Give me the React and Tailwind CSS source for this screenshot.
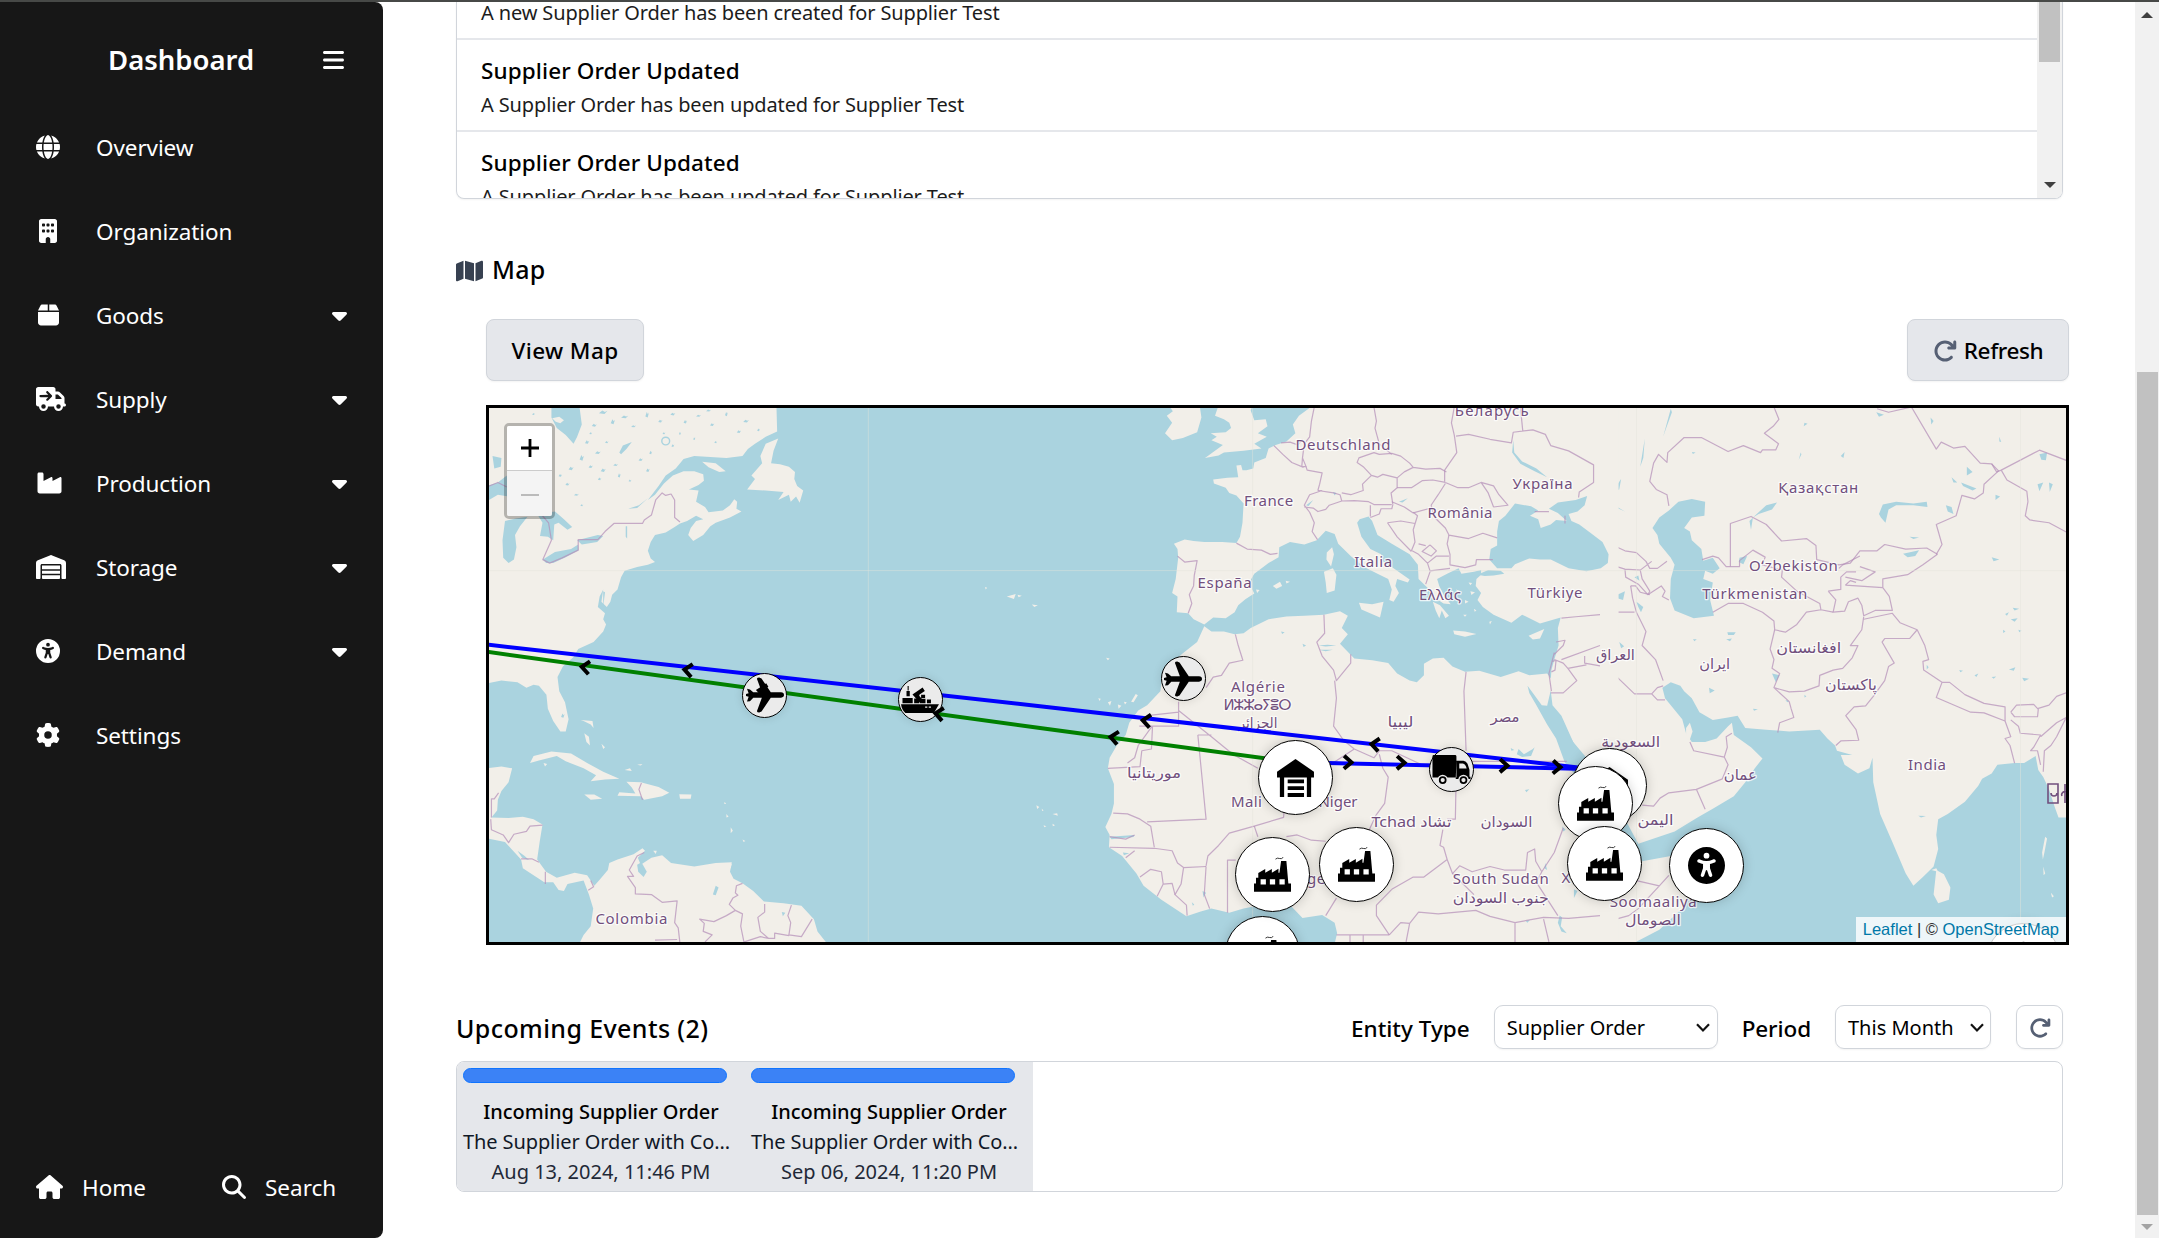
import React from "react";
import {
  FaGlobe, FaBuilding, FaBox, FaTruckArrowRight, FaIndustry, FaWarehouse, FaUniversalAccess, FaGear,
  FaHouse, FaMagnifyingGlass, FaBars, FaCaretDown, FaMap, FaArrowRotateRight,
} from "react-icons/fa6";

const NAV = [
  ["Overview", FaGlobe, "w-6", false],
  ["Organization", FaBuilding, "w-[18px]", false],
  ["Goods", FaBox, "w-[21px]", true],
  ["Supply", FaTruckArrowRight, "w-[30px]", true],
  ["Production", FaIndustry, "w-[27px]", true],
  ["Storage", FaWarehouse, "w-[30px]", true],
  ["Demand", FaUniversalAccess, "w-6", true],
  ["Settings", FaGear, "w-6", false],
];

function Sidebar() {
  return (
    <aside className="flex w-[383px] shrink-0 flex-col rounded-r-lg bg-[#171717] text-[22.5px] text-white">
      <div className="flex h-[103px] items-center justify-between pr-[39px] pl-[108px] pt-[12px]">
        <h1 className="text-[27.5px] leading-none font-semibold">Dashboard</h1>
        <FaBars className="h-6 w-[21px]" />
      </div>
      <nav className="flex flex-col">
        {NAV.map(([label, Icon, width, caret]) => (
          <div key={label} className="flex h-[84px] items-center pr-[36px] pl-[36px]">
            <span className="flex w-[60px] items-center">
              <span className="flex min-w-6 justify-center">
                <Icon className={`h-6 ${width}`} />
              </span>
            </span>
            <span className="flex-1 pt-[2px] tracking-[-0.1px]">{label}</span>
            {caret && <FaCaretDown className="h-6 w-[15px]" />}
          </div>
        ))}
      </nav>
      <div className="mt-auto flex h-[102px] items-center pl-[36px]">
        <FaHouse className="h-6 w-[27px]" />
        <span className="ml-[19px] w-[140px] pt-[1px]">Home</span>
        <FaMagnifyingGlass className="size-6" />
        <span className="ml-[19px] pt-[1px]">Search</span>
      </div>
    </aside>
  );
}

const NOTES = [
  ["", "A new Supplier Order has been created for Supplier Test"],
  ["Supplier Order Updated", "A Supplier Order has been updated for Supplier Test"],
  ["Supplier Order Updated", "A Supplier Order has been updated for Supplier Test"],
];

function Notifications() {
  return (
    <section className="flex h-[197px] overflow-hidden rounded-b-lg border border-t-0 border-[#d1d5db] shadow-xs">
      <div className="flex min-w-0 flex-1 flex-col justify-start">
        <div className="-mt-[54px] flex flex-col">
          {NOTES.map(([title, text], i) => (
            <div key={i} className="flex h-[92px] shrink-0 flex-col border-b-2 border-[#e5e7eb] px-[24px] pt-[15px]">
              <span className="h-[33px] text-[22.5px] leading-[32px] font-medium tracking-[0.1px]">{title}</span>
              <span className="h-[33px] text-[20px] leading-[33px] tracking-[-0.13px] text-[#1c1c1c]">{text}</span>
            </div>
          ))}
        </div>
      </div>
      <div className="flex w-[25px] flex-col items-center justify-between bg-[#f1f1f1] pb-[10px]">
        <div className="h-[60px] w-[21px] bg-[#c1c1c1]" />
        <div className="h-0 w-0 border-x-[6px] border-t-[6px] border-x-transparent border-t-[#404040]" />
      </div>
    </section>
  );
}

/* Land, water and border outlines are kept in three sheets (west, middle, east),
   each with its own offset and scale into page pixels. */
const SHEET_WEST = "translate(480 400) scale(0.357143 0.350765)";
const SHEET_MIDDLE = "translate(1040 400) scale(0.357143 0.350765)";
const SHEET_EAST = "translate(1560 400) scale(0.382015 0.350765)";

const WEST_LAND = [
  "M20 15L830 15 832 90 800 105 770 125 750 140 735 160 690 165 600 160 570 168 548 195 520 215 500 245 470 285 490 270 515 238 540 215 570 203 600 203 625 212 627 230 612 242 585 255 612 258 605 290 630 305 640 320 680 315 700 300 712 283 720 290 718 310 732 318 700 335 660 350 645 360 625 385 597 402 583 385 590 365 605 345 625 340 605 330 580 345 560 352 545 362 520 378 490 385 478 405 470 430 478 452 490 462 470 470 440 476 405 487 395 505 385 540 370 555 365 575 355 590 340 575 345 540 335 560 330 590 350 608 345 625 353 640 345 660 318 690 275 710 262 733 232 760 217 790 222 830 238 862 248 910 240 945 225 945 205 915 190 880 186 840 165 815 150 812 130 820 105 805 60 800 20 808Z",
  "M835 110L822 145 815 180 840 183 865 190 882 205 880 225 888 245 905 258 895 293 885 275 870 290 865 270 835 285 850 262 800 258 748 255 770 225 760 215 790 180 785 160 800 125Z",
  "M622 176L660 180 688 203 670 205 640 192Z",
  "M140 1035L150 1015 200 1002 255 1008 300 1035 345 1060 390 1080 350 1082 310 1087 325 1070 290 1050 240 1030 215 1015 165 1028Z",
  "M410 1088L450 1090 500 1103 530 1120 510 1130 460 1140 450 1130 385 1128 390 1118 435 1122 425 1105Z",
  "M292 1125L320 1125 342 1137 310 1140Z",
  "M558 1124L592 1125 590 1137 560 1137Z",
  "M20 1050L60 1045 90 1050 80 1090 60 1115 50 1140 48 1170 32 1190 80 1192 120 1188 150 1195 175 1210 167 1260 160 1310 185 1345 215 1362 265 1348 300 1355 320 1385 335 1368 358 1340 362 1320 385 1310 430 1295 455 1278 462 1285 442 1305 450 1325 480 1305 510 1298 535 1320 600 1330 660 1320 705 1318 700 1345 710 1365 735 1378 765 1400 795 1430 850 1435 900 1442 935 1480 945 1515 972 1550 278 1550 290 1525 310 1500 317 1450 305 1410 290 1370 245 1380 235 1400 220 1397 205 1375 180 1375 120 1335 115 1310 70 1260 20 1250Z",
  "M282 912L315 915 318 935 310 925 290 915ZM292 950L305 960 308 985 298 975ZM340 980L350 990 345 995ZM405 1055L420 1050 425 1058ZM440 1040L455 1038 450 1042ZM678 1325L705 1322 702 1335 685 1332ZM178 1035L188 1038 182 1045ZM485 1285L495 1285 492 1294ZM702 1218L708 1228 702 1235ZM690 1180L696 1188 690 1190ZM735 1253L743 1257 738 1260ZM685 1145L689 1152 684 1152ZM1475 560L1500 553 1495 567ZM1505 555L1517 558 1508 562ZM1545 583L1562 585 1552 590ZM1414 533L1420 535 1416 540ZM1558 1155L1566 1160 1560 1166Z",
];
const WEST_WATER = [
  "M200 15L278 15 285 70 272 105 262 125 240 100 215 80 200 50Z",
  "M20 245L50 235 75 215 80 275 50 270 20 288Z",
  "M70 345L100 338 133 333 112 360 98 385 102 420 95 455 80 465 65 450 63 400Z",
  "M160 325L210 318 235 340 258 362 245 370 220 350 208 355 205 400 190 390 168 388 175 350Z",
  "M176 455L210 433 255 425 275 412 276 428 240 448 205 465 185 465Z",
  "M272 400L330 385 345 388 328 405 285 412Z",
  "M440 1325L452 1318 467 1345 458 1360 443 1345Z",
  "M105 1285L125 1300 138 1312 118 1305ZM652 1410L660 1385 668 1390 660 1412ZM845 1460L855 1462 848 1472Z",
  "M390 150L400 130 425 120 410 140 395 155ZM408 360L412 360 412 395 408 390ZM415 310L445 300 470 280 440 308ZM35 160L60 165 58 190 40 195ZM345 545L350 548 345 590Z",
];
const WEST_SPECKS = [
  [320, 72, 7, 4], [345, 35, 12, 5], [372, 62, 6, 7], [405, 48, 10, 4], [430, 75, 7, 3], [468, 42, 5, 8], [505, 60, 6, 4], [540, 40, 7, 4],
  [575, 62, 5, 5], [612, 45, 7, 3], [650, 70, 6, 4], [690, 40, 4, 6], [745, 60, 8, 4], [725, 90, 6, 4], [780, 85, 4, 4], [300, 120, 6, 5], [330, 150, 8, 4],
  [285, 165, 6, 8], [310, 190, 6, 4], [345, 200, 7, 5], [450, 170, 6, 4], [478, 150, 4, 5], [515, 95, 4, 3], [540, 130, 4, 4], [470, 200, 5, 5], [380, 185, 7, 3],
  [335, 225, 5, 4], [255, 195, 7, 5], [245, 240, 6, 4], [270, 270, 7, 3], [225, 215, 5, 4], [285, 300, 4, 3], [165, 210, 4, 4], [150, 40, 4, 3], [600, 110, 3, 4], [660, 120, 4, 3],
  [420, 230, 4, 3], [310, 95, 4, 3], [355, 120, 5, 3], [232, 900, 5, 6], [390, 215, 4, 6], [560, 95, 3, 4], [640, 30, 7, 3],
];
const WEST_BORDERS = [
  "M22 247L50 235 75 248M175 330L192 350 200 400 176 455 195 465 230 450 275 428 275 398 330 398 350 375 375 352 455 352 460 342 480 328 492 285 510 265 520 272 535 268 545 285 545 335 560 348",
  "M460 1290L440 1300 418 1340 430 1358 413 1358 435 1390 435 1408 480 1410 510 1432 552 1428 545 1490 555 1505 560 1550M490 1540L552 1538",
  "M735 1378L718 1385 715 1405 722 1412 708 1420 698 1438 715 1455 690 1470 655 1487 615 1480 628 1492 625 1515 650 1525 630 1545M715 1455L735 1465 730 1500 740 1550",
  "M797 1437L797 1460 778 1475 785 1515 808 1535 825 1535 825 1520 865 1527M872 1440L862 1470 870 1490 865 1525 900 1530 930 1480M740 1545L785 1530 808 1535",
  "M32 1190L32 1137 40 1137 52 1120M30 1195L32 1225 65 1240 80 1262 95 1238 130 1230 140 1215 175 1212M115 1308L145 1308 165 1318M183 1345V1380M310 1370L318 1388 303 1398M452 1092L445 1110 455 1140",
];
const LAKE_RING = [520, 117, 11];

const MIDDLE_LAND = [
  "M765 15L725 45 708 70 715 95 690 118 660 128 640 138 632 165 600 178 597 195 578 200 567 200 563 185 550 187 555 220 525 222 485 227 487 238 520 250 530 265 550 272 570 295 567 350 560 390 550 408 510 405 460 405 430 402 405 398 375 410 385 425 387 450 380 510 370 550 385 560 383 605 415 608 430 625 460 640 485 620 520 622 545 605 555 585 575 568 600 552 585 522 600 495 640 465 668 448 670 420 700 405 740 412 775 400 800 373 825 382 835 410 870 445 905 475 945 495 975 510 985 540 978 570 990 575 1005 550 995 530 1000 510 1030 520 1035 512 990 480 960 460 955 440 925 425 900 390 888 350 895 340 920 332 930 345 945 385 985 410 1035 440 1058 470 1060 510 1085 535 1100 560 1130 580 1150 582 1130 555 1118 530 1112 510 1140 495 1172 480 1180 495 1215 490 1235 485 1235 498 1222 510 1220 530 1235 550 1225 570 1240 590 1270 612 1320 635 1350 612 1400 637 1458 620 1450 650 1452 700 1440 740 1432 770 1425 870 1450 900 1570 1110 1620 1110 1620 15Z",
  "M1100 575L1120 585 1145 615 1135 622 1125 600 1118 622 1108 600Z",
  "M460 645L440 690 400 722 345 770 337 830 300 870 275 885 250 920 240 955 215 985 195 1020 190 1050 207 1095 207 1150 200 1180 183 1217 195 1240 193 1275 230 1300 270 1350 290 1385 340 1425 410 1472 450 1458 480 1450 530 1462 570 1450 620 1440 650 1430 700 1440 735 1477 790 1468 825 1490 832 1520 825 1550 1620 1550 1620 1060 1500 1010 1435 800 1420 780 1370 785 1340 773 1290 790 1230 772 1190 775 1155 760 1130 735 1100 737 1075 752 1075 785 1055 805 1035 800 1000 780 975 750 930 742 880 737 840 695 862 668 845 650 862 615 840 602 795 612 740 615 690 617 640 625 590 650 570 665 545 668 515 660 480 660Z",
  "M500 15L490 45 515 55 530 65 535 80 520 92 478 95 495 105 480 115 512 128 490 145 462 165 500 158 515 150 570 145 620 138 600 125 635 105 610 95 637 75 632 55 600 58 590 30 595 15Z",
  "M360 15L372 32 355 45 370 65 350 95 370 115 400 108 440 92 452 50 447 15Z",
  "M818 420L823 440 815 475 802 455 803 435ZM795 490L820 480 830 498 825 543 803 550 800 520ZM893 578L930 582 962 575 952 620 900 597ZM1157 657L1190 660 1222 667 1190 675 1160 668ZM1368 672L1412 653 1400 680 1380 683ZM652 530L672 518 678 530 662 538ZM688 515L700 518 690 523ZM605 540L615 542 608 550Z",
  "M1165 540L1178 545 1172 555ZM1190 570L1200 575 1190 580ZM1215 595L1222 600 1217 604ZM1185 612L1195 612 1190 618ZM1205 545L1218 548 1208 556ZM1200 520L1210 522 1205 528ZM1258 632L1265 630 1260 640ZM185 735L195 737 190 742ZM163 850L170 852 167 858ZM190 862L200 858 196 872ZM218 868L228 872 220 880ZM235 860L243 862 238 868ZM255 860L268 838 274 842 262 862ZM5 1165L10 1170 6 1172ZM35 1180L48 1178 50 1185ZM10 1212L18 1215 12 1218ZM35 1208L42 1212 36 1215Z",
];
const MIDDLE_WATER = [
  "M1280 375L1285 345 1303 330 1330 295 1375 303 1395 315 1372 330 1395 340 1402 365 1430 355 1445 342 1475 345 1450 322 1425 310 1450 292 1500 285 1532 274 1525 300 1505 318 1480 325 1488 345 1510 355 1540 378 1575 405 1592 440 1590 465 1570 480 1530 488 1480 480 1430 455 1400 455 1370 452 1330 468 1320 480 1280 480 1258 455 1262 425 1280 415Z",
  "M1225 498L1255 485 1290 487 1300 495 1270 500 1245 502Z",
  "M1365 815L1380 835 1405 870 1420 872 1430 828 1435 870 1460 900 1493 975 1530 1020 1580 1090 1620 1160 1675 1265 1640 1265 1600 1200 1550 1120 1500 1070 1470 1035 1445 965 1420 925 1390 870 1370 835Z",
  "M1325 115L1328 150 1350 175 1390 195 1420 220 1385 203 1345 182 1322 150ZM1005 290L1030 280 1015 292ZM745 300L765 285 752 302ZM820 262L830 265 825 272ZM780 700L805 698 830 700 800 703ZM780 712L820 712 800 716ZM735 695L745 700 738 704ZM675 660L685 662 678 667ZM1340 995L1355 1010 1380 995 1385 990 1375 1015 1350 1018 1335 1010ZM1318 992L1328 998 1320 1000ZM1358 1112L1370 1110 1362 1118ZM1455 1470L1462 1475 1458 1500 1475 1520 1460 1515 1450 1490ZM1415 1320L1420 1340 1412 1335ZM1360 1485L1372 1482 1365 1490ZM455 1400L465 1405 458 1418ZM425 1432L432 1438 428 1442ZM1462 1215L1472 1225 1465 1230ZM1495 1395L1505 1400 1495 1420Z",
  "M195 1245L265 1240 262 1246 200 1252ZM232 1290L250 1292 235 1298Z",
];
const MIDDLE_BORDERS = [
  "M768 20L760 60 755 105 740 125 735 165 745 190 733 190 735 165M745 190L748 200 790 208 783 240 778 258M655 130L680 155 705 178 738 192M675 122L700 120 722 128 735 112",
  "M790 258L755 270 740 300 755 320 768 350 762 375 777 398M740 305L765 308 778 318 800 312 810 300 845 288 840 270 822 265 778 258M845 288L880 287 920 290 935 298 985 298",
  "M845 265L870 270 905 258 903 240 928 215 945 220 960 212 1000 222 1000 250 983 265 988 298M928 215L905 190 888 178 893 165 935 150 950 155 985 152M985 152L1010 160 1035 180 1045 192 1020 205 1000 222M1045 192L1080 197 1120 195 1138 205",
  "M935 20L942 60 938 80 950 125 985 155M1160 20L1152 65 1160 100 1167 150 1150 175 1133 200 1133 232M1000 250L1040 250 1070 230 1100 228 1135 235",
  "M1135 235L1170 250 1200 250 1235 235 1270 245 1285 270 1310 300 1270 305M1235 235L1255 265 1270 305M1135 238L1115 270 1095 300M988 298L985 310 955 310 950 325 925 335M925 300V332M985 290L1020 305 1045 322 1095 308",
  "M1045 320L1057 330 1045 370 1050 405 1040 430M973 350L1010 345 1050 352M973 350L1000 390 1040 432M1095 300L1105 335 1135 365 1145 385 1200 395 1240 380 1280 393",
  "M1145 385L1140 410 1148 440 1148 470 1190 478 1220 470 1222 455 1268 455M1145 445L1110 445 1085 465 1092 487 1148 480M1085 465L1060 440 1042 430M1092 490L1080 525M1092 413L1110 430 1095 445 1070 432 1092 413M1060 410L1080 415",
  "M1165 103L1200 98 1260 112 1320 122 1325 92 1380 85 1415 98 1430 130 1480 145 1550 185 1550 235 1510 262 1508 278M1345 20L1352 90M1385 318L1425 318M1470 330V352",
  "M550 408L580 425 620 428 645 440 665 437M385 445L405 462 440 458 432 500 430 530 418 555 425 580 415 608M1460 622L1500 618 1568 612",
  "M547 668L555 700 568 742 530 750 508 785 485 790 465 820M388 860V930H278M388 885L480 960 540 1010 610 1050M442 955H480M442 955L465 1195 300 1203M388 890L300 900M315 930L312 995 285 1000 280 1045 190 1050M314 930L275 985 265 1020 245 1035",
  "M795 612L797 665 775 690 790 730 822 770 830 800 870 750 870 725M825 800L830 850 822 930 850 970 880 995M880 995L935 1020 950 1000 985 1000 1080 1045M880 995L820 1035",
  "M1193 775L1187 830 1193 1000M1193 1030H1475M1165 1085L1163 1195H1140M950 1010L960 1050 975 1075 965 1150 940 1185 922 1225 905 1260M685 1150L682 1190 600 1215 530 1235 500 1270 470 1300 465 1328",
  "M205 1178L245 1180 280 1195 310 1215 320 1275M195 1275L320 1278 370 1285 385 1320 402 1333 395 1380 378 1410 410 1440 412 1470M402 1333L465 1330M525 1462L525 1312H548M600 1215L610 1245M690 1245L720 1240 760 1255 800 1258M195 1245L240 1252 265 1240",
  "M240 1305L265 1285M280 1360L310 1338 340 1345 345 1380 328 1415M345 1380L370 1378 378 1410M465 1330L460 1410 475 1450M830 1420L800 1470M985 1395L942 1440 942 1470 978 1525M985 1395L1045 1360 1075 1360 1140 1310 1130 1275 1120 1270 1128 1225M1140 1310L1155 1350 1215 1410",
  "M1155 1350L1175 1328 1210 1345 1260 1330 1300 1340 1360 1340 1365 1290 1385 1280 1388 1315 1405 1345 1440 1290 1465 1220M1405 1345L1390 1375 1450 1470M978 1525L1010 1490 1035 1492 1060 1460 1115 1465 1220 1455 1260 1472 1330 1490V1545M1330 1490L1410 1475 1480 1478 1568 1470M1410 1480L1425 1545M1035 1492L1025 1545M830 1525H978M868 1525V1548M905 1525V1548",
  "M1445 690L1470 685 1465 700 1440 725M1435 745L1445 742 1442 770 1432 775M1440 720L1425 780 1432 830M1430 835L1465 835 1503 800 1478 765 1530 755M1478 765L1465 750 1440 740M1460 740L1568 700M1525 730V750L1568 758",
];

const EAST_LAND = [
  "M85 15L1335 15 1335 1190 1305 1190 1295 1160 1280 1110 1265 1075 1252 1055 1245 1015 1215 1035 1190 1035 1145 1040 1130 1065 1105 1080 1095 1100 1060 1145 1015 1180 990 1195 985 1240 990 1280 978 1330 950 1360 925 1385 905 1350 870 1260 838 1180 820 1090 818 1020 810 1050 780 1065 745 1040 735 1012 765 1012 725 1000 720 985 700 965 680 940 600 945 540 940 485 935 465 900 440 905 400 912 365 890 345 850 325 830 315 815 290 805 268 820 275 850 320 910 330 950 345 975 380 975 410 965 440 930 450 920 455 955 500 990 530 1022 510 1050 485 1090 455 1130 400 1165 360 1190 300 1230 205 1265 185 1230 85 1100Z",
  "M85 1150L180 1265 215 1315 290 1300 350 1290 395 1285 370 1380 320 1450 260 1510 190 1550 85 1550Z",
  "M330 935L340 920 347 945 340 968 330 960ZM985 1340L1005 1352 1022 1390 1018 1425 990 1435 978 1410ZM972 1340L985 1335 990 1345ZM1270 1245L1275 1250 1268 1290 1264 1310 1262 1290ZM1265 1330L1270 1350 1266 1355ZM1285 1405L1293 1415 1288 1418ZM410 1292L425 1290 415 1298ZM320 948L328 950 325 955Z",
];
const EAST_WATER = [
  "M260 335L285 315 310 290 345 282 380 290 378 330 345 335 325 365 340 375 345 400 370 425 375 458 400 450 418 480 400 495 380 487 375 510 400 520 393 570 403 615 350 622 300 600 288 565 290 510 300 470 290 450 260 410 255 385 242 365Z",
  "M835 325L845 298 880 290 925 295 960 290 962 305 925 300 880 300 860 312 852 350 840 335ZM500 370L496 345 510 330 540 300 568 292 555 312 520 325 505 335ZM470 450L490 445 480 468 468 462ZM898 438L940 428 930 445 910 448ZM1010 300L1025 305 1030 325 1015 318Z",
  "M270 105L290 25 293 35 278 80ZM210 190L222 110 218 165ZM138 260L160 225 155 255ZM135 295L170 318 150 308ZM735 160L745 148 742 165ZM625 170L630 150 632 155ZM828 35L848 42 835 48ZM640 65L648 68 638 75ZM345 148L355 150 348 154ZM1050 235L1090 252 1080 258 1055 245ZM1065 190L1080 205 1065 215ZM1025 220L1040 235 1030 235ZM1255 155L1275 150 1272 172 1260 170ZM1140 270L1152 275 1140 285ZM1250 240L1265 235 1255 260ZM1280 235L1290 240 1282 262ZM1130 448L1150 455 1135 460ZM915 390L940 392 925 396Z",
  "M140 560L170 545 165 570 150 565ZM200 575L218 590 212 605 205 590ZM438 662L460 662 455 670 440 670ZM348 682L358 682 352 688ZM435 682L450 680 445 688ZM155 690L168 702 160 708ZM390 820L405 828 392 836ZM1165 610L1175 605 1170 615ZM1185 592L1202 595 1190 600ZM1180 625L1198 622 1190 632ZM1175 768L1192 762 1188 772ZM1210 792L1228 795 1215 802ZM1085 785L1095 780 1090 790ZM1130 790L1142 788 1135 795ZM1045 770L1055 772 1048 776ZM960 755L965 762 960 768ZM555 780L575 785 565 805ZM505 880L518 882 508 886ZM1200 655L1208 658 1202 662ZM1160 655L1166 660 1160 664ZM45 640L60 638 50 650ZM195 505L205 500 208 515ZM590 855L600 858 595 862ZM640 840L645 845 640 848ZM938 1185L958 1186 945 1190ZM970 50L978 60 972 70ZM1150 105L1155 120 1150 118Z",
  "M0 1475L8 1500 15 1520 5 1520ZM35 1440L45 1420 40 1440Z",
];
const EAST_BORDERS = [
  "M285 302L280 270 252 255 235 232 245 180 258 155 280 178 282 150 325 107 370 107 440 147 480 130 525 150 530 142 565 142 572 125 535 95 558 75 573 55 560 20",
  "M830 25L860 35 920 20 985 140 998 120 1030 137 1060 132 1100 180 1130 182 1148 202 1110 240 1108 265 1085 282 1052 272 1037 330 985 355 1000 412 985 440",
  "M1155 200L1255 143 1325 172M1155 200L1170 228 1222 260 1225 290 1218 330 1230 342 1280 350 1328 378M1130 182L1143 205 1155 200",
  "M0 158L45 165 85 182 92 195 88 245 50 255 48 278M446 475V352L500 332 540 355 580 402 645 395 670 415 672 455 730 470 760 465 785 430 830 430 850 412 905 425 960 422 988 440",
  "M446 475L470 475 470 458 505 428 537 448 530 470 582 485 580 505 620 545 680 580 683 598M372 455L400 445 415 450 435 475 446 475M400 605L440 580 480 580 530 605 560 630 562 655 590 662 620 640 645 605 683 598 715 605",
  "M730 480L740 470 785 445M785 475L825 490 790 515 747 505M747 528L760 515 775 520M747 528L845 535 845 510 910 498 950 470 988 440M702 545L735 540 735 505 750 490 775 490M702 545L722 570 715 605 745 602 755 575 780 565 790 585 795 615 825 600 870 600 862 560 845 535",
  "M795 618L790 655 760 700 780 700 765 735 740 765 715 770 680 785 678 815 640 830 600 832 560 820 575 780 555 765 560 740 550 710 562 655M560 820L600 860 605 880 612 905 575 920 570 948",
  "M795 625L870 608 890 635 935 655 915 680 850 680 843 690 875 750 860 760 850 800 820 845 800 872 770 875 748 900 775 940 782 970 735 972 722 985M935 655L955 700 965 740 950 745 952 770 1000 805 985 848 1075 890 1110 892 1165 915M1000 805L1020 805 1060 840 1110 865 1165 875 1165 915",
  "M1180 890L1195 870 1240 868 1252 882 1250 903 1190 903 1180 890M1250 880L1280 870 1300 845 1325 835M1165 915L1170 930 1180 960 1165 965 1178 985 1190 1035M1180 912L1200 930 1205 950 1258 955 1240 990 1232 1000 1250 1000 1258 1040M1325 905L1300 960 1285 985 1268 1000 1265 1060M1325 905L1300 920 1258 960",
  "M85 402L120 405 170 430 200 435 225 460 235 480 255 480 280 460M125 467L170 482 210 485 240 460M170 482L172 505 205 525 230 555 265 530 275 545 268 560 285 570M210 485L215 510 235 545 230 555M185 530L190 565 200 605 225 660 215 700 250 740 270 800",
  "M15 618L60 620 140 605 195 605M140 605L120 640 112 690 62 720 70 755 15 770 40 800 0 838M62 720L15 748M70 755L100 760 140 780 195 838 240 838 255 820 270 815M240 838L255 855 275 855M185 530L198 530 210 548 235 555",
  "M340 975L350 1000 430 1018 438 990 435 960 450 950M430 1018L440 1040 425 1080 357 1110 380 1167M357 1110L285 1120 262 1135 245 1158 215 1155M200 1370L260 1385 285 1355M260 1385L205 1450 180 1470 130 1485 110 1500V1545M0 1470L50 1492 90 1490 130 1480M0 1250L10 1230",
];

const LABELS = [
  ["Deutschland", 1342.9, 445.2, 95], ["France", 1268.6, 501.4, 49], ["Беларусь", 1491.8, 410.5, 74], ["Україна", 1542.5, 483.5, 60],
  ["România", 1460, 512.6, 65], ["Italia", 1373.2, 562.4, 38], ["España", 1224.6, 583, 54], ["Ελλάς", 1440, 595, 42], ["Türkiye", 1555, 592.6, 55],
  ["Algérie", 1257.9, 686.6, 54], ["ⵍⵣⵣⴰⵢⴻⵔ", 1257.5, 704.5, 68], ["الجزائر", 1258, 723, 39], ["ليبيا", 1400.4, 721.6, 26], ["مصر", 1505, 717.4, 29],
  ["موريتانيا", 1154, 772.9, 54], ["Mali", 1246.4, 802, 31], ["Niger", 1338, 802, 39], ["Tchad تشاد", 1411.4, 822, 80], ["السودان", 1506.4, 822, 52],
  ["South Sudan", 1500.7, 879, 96], ["جنوب السودان", 1500.7, 898, 96], ["Nigeria", 1318, 879, 54], ["X", 1566, 878, 10],
  ["Қазақстан", 1818.2, 487.7, 80], ["Oʻzbekiston", 1793.4, 566.3, 89], ["Türkmenistan", 1754.8, 593.6, 105], ["العراق", 1615.4, 655, 39],
  ["ایران", 1714.7, 664, 31], ["افغانستان", 1808.7, 647.6, 65], ["پاکستان", 1851, 684.8, 52], ["السعودية", 1630.7, 742.4, 59], ["عمان", 1740.3, 774.6, 33],
  ["اليمن", 1655.5, 820.3, 36], ["Soomaaliya", 1653.2, 902.3, 87], ["الصومال", 1653, 920.2, 56], ["India", 1927, 764.8, 38], ["Colombia", 631.4, 919, 72],
];

/* tip x, tip y, rotation in degrees (0 points left) */
const ARROWS = [
  [579.3, 666.6, 7], [682, 669.4, 7], [913, 694.5, 7], [756.5, 690, 8], [933, 713, 8], [1108, 736.7, 8], [1140.3, 720, 7], [1369, 743.7, 7],
  [1354, 762.4, 181], [1407, 762.8, 181], [1510, 765.8, 181], [1563, 767.3, 182],
];

function Sheet({ at, land, water, specks = [], borders }) {
  return (
    <g transform={at}>
      {land.map((d, i) => <path key={i} d={d} fill="#f2efe9" />)}
      {water.map((d, i) => <path key={i} d={d} fill="#aad3df" />)}
      {specks.map(([x, y, a, b], i) => (
        <path key={i} d={`M${x - a} ${y + b * 0.6}L${x - a * 0.2} ${y - b} ${x + a * 0.4} ${y - b * 0.2} ${x + a} ${y - b * 0.8} ${x + a * 0.3} ${y + b}Z`} fill="#aad3df" />
      ))}
      {borders.map((d, i) => (
        <path key={i} d={d} fill="none" stroke="#b48fb8" strokeOpacity="0.72" strokeWidth="1.2" strokeLinejoin="round" vectorEffect="non-scaling-stroke" />
      ))}
    </g>
  );
}

function BaseMap() {
  return (
    <svg className="block size-full" viewBox="489 408 1577 534" preserveAspectRatio="none">
      <rect x="489" y="408" width="1577" height="534" fill="#aad3df" />
      <Sheet at={SHEET_WEST} land={WEST_LAND} water={WEST_WATER} specks={WEST_SPECKS} borders={WEST_BORDERS} />
      <g transform={SHEET_WEST}>
        <path d="M202 52L222 48 235 58 225 66 212 62Z" fill="#f2efe9" />
        <circle cx={LAKE_RING[0]} cy={LAKE_RING[1]} r={LAKE_RING[2]} fill="none" stroke="#aad3df" strokeWidth="4" />
      </g>
      <Sheet at={SHEET_EAST} land={EAST_LAND} water={EAST_WATER} borders={EAST_BORDERS} />
      <Sheet at={SHEET_MIDDLE} land={MIDDLE_LAND} water={MIDDLE_WATER} borders={MIDDLE_BORDERS} />
      <path d="M868.3 408V942M1252.6 408V942M1636.5 408V942M2020.5 408V942M489 570.6H2066" stroke="#e4e4dc" strokeOpacity="0.45" strokeWidth="1" />
      <g fontFamily="'Noto Sans','DejaVu Sans',sans-serif" fontSize="15" fill="#714f7d" stroke="#ffffff" strokeOpacity="0.75" strokeWidth="2.5" paintOrder="stroke" strokeLinejoin="round" textAnchor="middle">
        {LABELS.map(([t, x, y, w]) => (
          <text key={t} x={x} y={y + 5} textLength={w} lengthAdjust={/[\u0600-\u06ff]/.test(t) ? "spacingAndGlyphs" : "spacing"}>{t}</text>
        ))}
      </g>
      <path d="M2048 784h10v19h-10zM2065 784v19M2051 793a3 3 0 1 0 6 0M2062 796a3 3 0 0 1 4 -4" fill="none" stroke="#714f7d" strokeWidth="1.6" />
      <g fill="none" strokeWidth="4">
        <path d="M485 651.5L1040 728 1295 762.3" stroke="#008000" />
        <path d="M485 644.4L1040 706.2 1609 771" stroke="#0000ff" />
        <path d="M1295 762.3L1609 769.5" stroke="#0000ff" />
      </g>
    </svg>
  );
}

function Arrows() {
  return (
    <svg className="pointer-events-none absolute inset-0 size-full" viewBox="489 408 1577 534" preserveAspectRatio="none">
      {ARROWS.map(([x, y, r], i) => (
        <path key={i} transform={`translate(${x} ${y}) rotate(${r})`} d="M10 -6.5L2.5 0 10 6.5" fill="none" stroke="#000" strokeWidth="4" />
      ))}
    </svg>
  );
}

const Factory = () => (
  <svg className="h-[35px] w-[37px]" viewBox="0 0 112 105">
    <path d="M0 105V80H6V62H13V48L34 36V47L54 36V47L74 35V47H77L82 12H98L104 80H112V105ZM20 67V83H36V67ZM48 67V83H64V67ZM77 67V83H93V67Z" fillRule="evenodd" />
    <path d="M65 6Q71 1 77 4T89 0" fill="none" stroke="#000" strokeWidth="2.4" />
  </svg>
);
const Depot = () => (
  <svg className="h-[38px] w-[37px]" viewBox="0 0 104 107">
    <path d="M52 0L104 36V52H96V107H84V52H20V107H8V52H0V36ZM30 58H76V68H30ZM30 77H76V87H30ZM30 96H76V107H30Z" />
  </svg>
);
const Person = () => <FaUniversalAccess className="size-[37px]" />;
const Plane = () => (
  <svg className="h-[36px] w-[38px]" viewBox="0 0 115 106">
    <path d="M3 34L12 36 22 45H48L33 4Q34 0 40 0L47 3 75 45H106Q115 46 115 53T106 61H75L47 103 40 106Q34 106 33 102L48 61H22L12 72 3 73 8 58 0 56V50L8 48Z" />
  </svg>
);
const Ship = () => (
  <svg className="h-[27px] w-[38px]" viewBox="0 0 104 74">
    <path d="M0 50H104L90 74H12Q2 66 0 50ZM4 33H32V47H4ZM15 14H24V28H15ZM18 0H21V12H18ZM36 34H50V47H36ZM55 35H67V47H55ZM71 37H82V47H71ZM55 24H66V33H55ZM40 22H50V31H40Z" />
    <path d="M66 58H72M76 58H82" stroke="#ebebeb" strokeWidth="3" />
  </svg>
);
const Lorry = () => (
  <svg className="mt-[2px] h-[31px] w-[39px]" viewBox="0 0 108 88">
    <path d="M4 0H64Q68 0 68 4V64H0V4Q0 0 4 0ZM68 16H88Q96 17 100 26L105 42V62H108V68H66ZM76 24V38H97Q94 26 86 24Z" fillRule="evenodd" />
    <circle cx="29" cy="71" r="13" stroke="#ebebeb" strokeWidth="4" /><circle cx="29" cy="71" r="6" fill="#ebebeb" />
    <circle cx="88" cy="71" r="13" stroke="#ebebeb" strokeWidth="4" /><circle cx="88" cy="71" r="6" fill="#ebebeb" />
  </svg>
);

/* marker centres in map pixels */
const SITES = [
  [1262, 953.5, Factory], [2023, 960, Depot], [1609, 785.5, Depot], [1295, 777.8, Depot], [1595, 803.5, Factory],
  [1272.5, 874, Factory], [1356.4, 864.8, Factory], [1604, 863.5, Factory], [1706, 865, Person],
];
const VEHICLES = [[764.6, 695.3, Plane], [920.4, 699.9, Ship], [1183, 678.7, Plane], [1451.4, 769, Lorry]];

function MapView() {
  return (
    <div className="relative ml-[30px] h-[540px] w-[1583px] overflow-hidden border-[3px] border-black">
      <BaseMap />
      {VEHICLES.map(([x, y, Icon], i) => (
        <div key={i} className="absolute flex size-[45px] items-center justify-center rounded-full border-[1.5px] border-black bg-[#ebebeb] shadow-[0_0_10px_rgba(0,0,0,0.12)]" style={{ left: x - 489 - 22.5, top: y - 408 - 22.5 }}>
          <Icon />
        </div>
      ))}
      <Arrows />
      {SITES.map(([x, y, Icon], i) => (
        <div key={i} className="absolute flex size-[75px] items-center justify-center rounded-full border-[1.5px] border-black bg-white shadow-[0_0_12px_rgba(0,0,0,0.18)]" style={{ left: x - 489 - 37.5, top: y - 408 - 37.5 }}>
          <Icon />
        </div>
      ))}
      <div className="absolute top-[15px] left-[15px] flex w-[51px] flex-col rounded-[5px] border-[3px] border-black/25 bg-clip-padding">
        <div className="flex h-[45px] items-center justify-center rounded-t-[2px] border-b border-[#ccc] bg-white">
          <svg className="size-5" viewBox="0 0 20 20"><path d="M10 1V19M1 10H19" stroke="#000" strokeWidth="2.8" /></svg>
        </div>
        <div className="flex h-[45px] items-center justify-center rounded-b-[2px] bg-[#f4f4f4]">
          <svg className="size-5" viewBox="0 0 20 20"><path d="M1 11H19" stroke="#bbb" strokeWidth="2" /></svg>
        </div>
      </div>
      <div className="absolute right-0 bottom-0 flex h-[25px] items-center bg-white/80 px-[7px] font-['Liberation_Sans',Arial,sans-serif] text-[16.5px] leading-none whitespace-pre text-[#333]">
        <span className="text-[#0078a8]">Leaflet</span> | © <span className="text-[#0078a8]">OpenStreetMap</span>
      </div>
    </div>
  );
}

function Select({ children, className }) {
  return (
    <div className={`flex h-11 items-center justify-between rounded-[9px] border border-[#d1d5db] pl-[12px] text-[20px] shadow-xs ${className}`}>
      <span className="pt-[2px]">{children}</span>
      <svg className="h-[9px] w-[14px]" viewBox="0 0 14 9"><path d="M1 1.2L7 7.4 13 1.2" fill="none" stroke="#111" strokeWidth="2.2" /></svg>
    </div>
  );
}

const EVENTS = [
  ["Incoming Supplier Order", "The Supplier Order with Co...", "Aug 13, 2024, 11:46 PM"],
  ["Incoming Supplier Order", "The Supplier Order with Co...", "Sep 06, 2024, 11:20 PM"],
];

function Events() {
  return (
    <section>
      <div className="flex h-11 items-center text-[22.5px] font-medium">
        <h2 className="flex-1 pt-[3px] text-[25px] tracking-[0.4px]">Upcoming Events (2)</h2>
        <span className="mr-6 pt-[3px]">Entity Type</span>
        <Select className="mr-6 w-[224px] pr-[7px] font-normal">Supplier Order</Select>
        <span className="mr-6 pt-[3px] tracking-[-0.1px]">Period</span>
        <Select className="mr-[25px] w-[156px] pr-[6px] font-normal">This Month</Select>
        <button className="flex h-11 w-[47px] items-center justify-center rounded-[9px] border border-[#d1d5db] shadow-xs">
          <FaArrowRotateRight className="mt-px size-[22px] text-[#566074]" />
        </button>
      </div>
      <div className="mt-3 flex h-[131px] overflow-hidden rounded-lg border border-[#d1d5db]">
        {EVENTS.map(([title, text, date]) => (
          <div key={date} className="w-[288px] bg-[#e5e7eb] pt-[6px] pl-[6px] text-[20px]">
            <div className="h-[15px] w-[264px] rounded-full border border-[#0f74ff] bg-[#3b82f6]" />
            <div className="mt-[14px] flex w-[276px] flex-col">
              <span className="h-[30px] text-center leading-[30px] font-medium tracking-[-0.05px]">{title}</span>
              <span className="h-[30px] leading-[30px] tracking-[-0.1px] text-[#111827]">{text}</span>
              <span className="h-[30px] text-center leading-[30px] text-[#1f2937]">{date}</span>
            </div>
          </div>
        ))}
      </div>
    </section>
  );
}

export default function App() {
  return (
    <div className="flex h-[1238px] w-[2159px] flex-col overflow-hidden bg-white font-['Noto_Sans','DejaVu_Sans',sans-serif] text-black">
      <div className="h-[2px] shrink-0 bg-[#474947]" />
      <div className="flex min-h-0 flex-1">
        <Sidebar />
        <main className="min-w-0 flex-1 pl-[73px]">
          <div className="w-[1607px]">
            <Notifications />
          </div>
          <div className="mt-[51px] flex h-[40px] items-center">
            <FaMap className="mt-[2px] h-6 w-[27px] text-[#374151]" />
            <h2 className="ml-[9px] text-[25px] font-medium tracking-[0.3px]">Map</h2>
          </div>
          <div className="mt-[29px] ml-[30px] flex w-[1583px] justify-between text-[22.5px] font-medium">
            <button className="flex h-[62px] w-[158px] items-center justify-center rounded-lg border border-[#d1d5db] bg-[#e5e7eb] pt-[2px] tracking-[0.4px] shadow-xs">View Map</button>
            <button className="flex h-[62px] w-[162px] items-center justify-center rounded-lg border border-[#d1d5db] bg-[#e5e7eb] pt-[2px] tracking-[-0.4px] shadow-xs">
              <FaArrowRotateRight className="mr-[7px] size-6 text-[#566074]" />
              Refresh
            </button>
          </div>
          <div className="mt-6">
            <MapView />
          </div>
          <div className="mt-[60px] w-[1607px]">
            <Events />
          </div>
        </main>
        <div className="flex w-[24px] shrink-0 flex-col items-center bg-[#f1f1f1] pt-[10px]">
          <div className="h-0 w-0 border-x-[6px] border-b-[6px] border-x-transparent border-b-[#404040]" />
          <div className="mt-[354px] h-[843px] w-[21px] bg-[#c1c1c1]" />
          <div className="mt-[9px] h-0 w-0 border-x-[6px] border-t-[6px] border-x-transparent border-t-[#a3a3a3]" />
        </div>
      </div>
    </div>
  );
}
